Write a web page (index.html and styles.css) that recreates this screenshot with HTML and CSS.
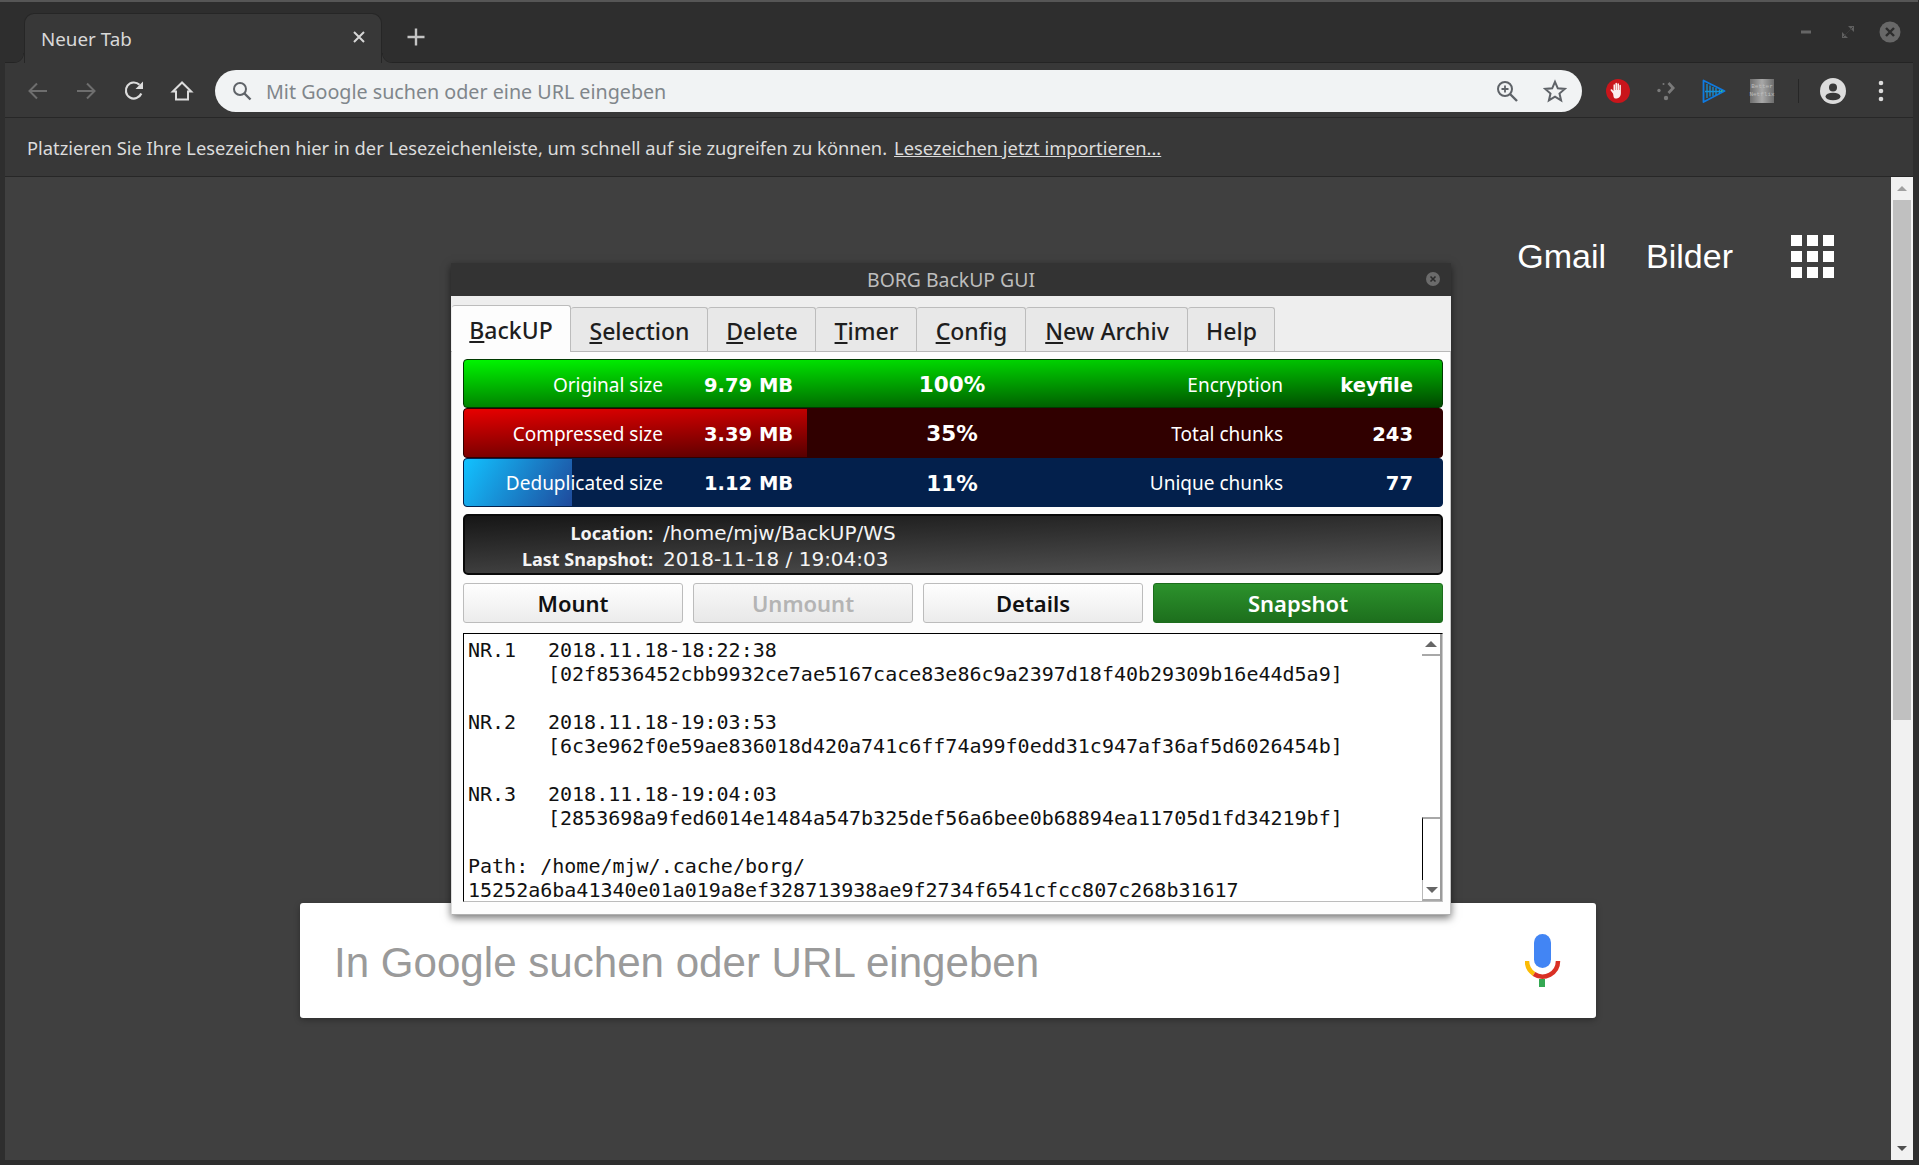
FILE: index.html
```html
<!DOCTYPE html>
<html lang="de">
<head>
<meta charset="utf-8">
<title>Neuer Tab</title>
<link rel="stylesheet" href="styles.css">
</head>
<body>
<div class="browser">
  <header class="tabstrip">
    <div class="tab">
      <span class="tab-title">Neuer Tab</span>
      <svg class="tab-close" width="14" height="14" viewBox="0 0 14 14"><path d="M2 2l10 10M12 2L2 12" stroke="#d6d6d6" stroke-width="2" fill="none"/></svg>
    </div>
    <svg class="newtab" width="20" height="20" viewBox="0 0 20 20"><path d="M10 1.500v17M1.500 10h17" stroke="#c4c4c4" stroke-width="2.400" fill="none"/></svg>
    <div class="wm">
      <svg class="wm-min" width="10" height="4" viewBox="0 0 10 4"><rect width="10" height="3" y="0.500" fill="#666"/></svg>
      <svg class="wm-max" width="12" height="12" viewBox="0 0 12 12"><path d="M0 12V6l6 6zM12 0v6L6 0z" fill="#5f5f5f"/><path d="M1 11L11 1" stroke="#3a3a3a" stroke-width="1"/></svg>
      <svg class="wm-close" width="22" height="22" viewBox="0 0 22 22"><circle cx="11" cy="11" r="10.500" fill="#686868"/><path d="M7 7l8 8M15 7l-8 8" stroke="#2c2c2c" stroke-width="2.400" fill="none"/></svg>
    </div>
  </header>

  <nav class="toolbar">
    <svg class="nav-icon" width="24" height="24" viewBox="0 0 24 24"><path d="M21 12H3.500M11 4.500L3.500 12l7.500 7.500" stroke="#6e6e6e" stroke-width="2" fill="none"/></svg>
    <svg class="nav-icon" width="24" height="24" viewBox="0 0 24 24"><path d="M3 12h17.500M13 4.500l7.500 7.500-7.500 7.500" stroke="#6e6e6e" stroke-width="2" fill="none"/></svg>
    <svg class="nav-icon" width="24" height="24" viewBox="0 0 24 24"><path d="M19.300 14.500A8 8 0 1 1 17.500 5.800" stroke="#dcdcdc" stroke-width="2.200" fill="none"/><path d="M21 2.500V10h-7.500z" fill="#dcdcdc"/></svg>
    <svg class="nav-icon" width="24" height="24" viewBox="0 0 24 24"><path d="M12 3.500L2.800 12.500H6V20.500H18V12.500H21.200z" stroke="#dcdcdc" stroke-width="2" fill="none"/></svg>
    <div class="omnibox">
      <svg width="20" height="20" viewBox="0 0 20 20"><circle cx="8" cy="8" r="6" stroke="#5f6368" stroke-width="2" fill="none"/><path d="M12.500 12.500l6 6" stroke="#5f6368" stroke-width="2.400"/></svg>
      <span class="omni-text">Mit Google suchen oder eine URL eingeben</span>
      <svg class="omni-zoom" width="22" height="22" viewBox="0 0 22 22"><circle cx="9" cy="9" r="7" stroke="#5f6368" stroke-width="2" fill="none"/><path d="M14 14l7 7" stroke="#5f6368" stroke-width="2.400"/><path d="M9 5.500v7M5.500 9h7" stroke="#5f6368" stroke-width="1.800"/></svg>
      <svg class="omni-star" width="24" height="24" viewBox="0 0 24 24"><path d="M12 2.800l2.800 6.500 7 .6-5.300 4.600 1.600 6.900-6.100-3.700-6.100 3.700 1.600-6.900-5.300-4.600 7-.6z" stroke="#5f6368" stroke-width="2" fill="none"/></svg>
    </div>
    <div class="extensions">
      <svg width="24" height="24" viewBox="0 0 24 24"><circle cx="12" cy="12" r="12" fill="#c9151b"/><path d="M7 14.500l-2.300-3c-.6-.9.700-1.700 1.400-.9l1.400 1.500V6c0-1.100 1.500-1.100 1.500 0v5h.4V4.500c0-1.100 1.600-1.100 1.600 0V11h.4V5c0-1.100 1.600-1.100 1.600 0v6h.4V6.500c0-1.100 1.500-1.100 1.500 0V14c0 3.300-2 5.500-4.800 5.500S7.700 17.500 7 14.500z" fill="#fbeeee"/></svg>
      <svg width="24" height="24" viewBox="0 0 24 24"><circle cx="5" cy="11.500" r="1.700" fill="#7a7a7a"/><circle cx="9.500" cy="5" r="1" fill="#7a7a7a"/><circle cx="12" cy="19" r="2.200" fill="#7a7a7a"/><path d="M15.500 3l5.500 6-5.500 6-2-2 3.700-4-3.700-4z" fill="#7a7a7a"/></svg>
      <svg width="24" height="24" viewBox="0 0 24 24"><path d="M1.500 1.500L22.500 12 1.500 23z" stroke="#0f7ae0" stroke-width="1.800" fill="none" stroke-linejoin="round"/><path d="M5 5v14M8 6.500v11M11 8v9M14 9v7M17.500 10.500v4M3 12.500h17" stroke="#1590d8" stroke-width="1.300" fill="none"/><path d="M19 11l2.500 1-2.500 1z" fill="#35c48b"/></svg>
      <div class="netflix"><span>Better</span><span>Netflix</span></div>
    </div>
    <span class="tool-sep"></span>
    <svg class="avatar" width="26" height="26" viewBox="0 0 26 26"><circle cx="13" cy="13" r="13" fill="#dcdcdc"/><circle cx="13" cy="9.500" r="4" fill="#383838"/><ellipse cx="13" cy="18.500" rx="7.500" ry="3.800" fill="#383838"/></svg>
    <svg class="menu-dots" width="6" height="22" viewBox="0 0 6 22"><circle cx="3" cy="3" r="2.300" fill="#dcdcdc"/><circle cx="3" cy="11" r="2.300" fill="#dcdcdc"/><circle cx="3" cy="19" r="2.300" fill="#dcdcdc"/></svg>
  </nav>

  <div class="bookmarks">
    <span>Platzieren Sie Ihre Lesezeichen hier in der Lesezeichenleiste, um schnell auf sie zugreifen zu können.</span>
    <a class="bm-link">Lesezeichen jetzt importieren...</a>
  </div>

  <div class="viewport">
    <main class="page">
      <div class="g-header">
        <a class="g-link">Gmail</a>
        <a class="g-link">Bilder</a>
        <div class="g-apps"><i></i><i></i><i></i><i></i><i></i><i></i><i></i><i></i><i></i></div>
      </div>
      <div class="g-search">
        <span class="g-placeholder">In Google suchen oder URL eingeben</span>
        <svg class="g-mic" width="36" height="54" viewBox="0 0 36 54"><rect x="9" y="0" width="17" height="34" rx="8.500" fill="#4285f4"/><path d="M2 27a15.500 15.500 0 0 0 7 13" stroke="#fbbc05" stroke-width="4.500" fill="none"/><path d="M9 40a15.500 15.500 0 0 0 24-13" stroke="#d93025" stroke-width="4.500" fill="none"/><rect x="14" y="45" width="6" height="8" fill="#34a853"/></svg>
      </div>

      <section class="dialog">
        <div class="dlg-title">
          <span class="dlg-name">BORG BackUP GUI</span>
          <svg class="dlg-close" width="14" height="14" viewBox="0 0 14 14"><circle cx="7" cy="7" r="7" fill="#6b6b6b"/><path d="M4.500 4.500l5 5M9.500 4.500l-5 5" stroke="#2c2c2c" stroke-width="1.600"/></svg>
        </div>
        <div class="dlg-tabs">
          <span class="dtab dtab-active"><u>B</u>ackUP</span>
          <span class="dtab w-sel"><u>S</u>election</span>
          <span class="dtab w-del"><u>D</u>elete</span>
          <span class="dtab w-tim"><u>T</u>imer</span>
          <span class="dtab w-cfg"><u>C</u>onfig</span>
          <span class="dtab w-new"><u>N</u>ew Archiv</span>
          <span class="dtab w-hlp">Help</span>
        </div>
        <div class="dlg-panel">
          <div class="stats">
            <div class="stat stat-green"><span class="s-label">Original size</span><b class="s-val">9.79 MB</b><b class="s-pct">100%</b><span class="s-label">Encryption</span><b class="s-right">keyfile</b></div>
            <div class="stat stat-red"><span class="s-label">Compressed size</span><b class="s-val">3.39 MB</b><b class="s-pct">35%</b><span class="s-label">Total chunks</span><b class="s-right">243</b></div>
            <div class="stat stat-blue"><span class="s-label">Deduplicated size</span><b class="s-val">1.12 MB</b><b class="s-pct">11%</b><span class="s-label">Unique chunks</span><b class="s-right">77</b></div>
          </div>
          <div class="info">
            <b class="i-key">Location:</b><span class="i-val">/home/mjw/BackUP/WS</span>
            <b class="i-key">Last Snapshot:</b><span class="i-val">2018-11-18 / 19:04:03</span>
          </div>
          <div class="actions">
            <button class="btn">Mount</button>
            <button class="btn btn-off">Unmount</button>
            <button class="btn">Details</button>
            <button class="btn btn-go">Snapshot</button>
          </div>
          <div class="logbox">
            <div class="log">
              <div class="entry"><span>NR.1</span><span>2018.11.18-18:22:38</span><span></span><span>[02f8536452cbb9932ce7ae5167cace83e86c9a2397d18f40b29309b16e44d5a9]</span></div>
              <div class="entry"><span>NR.2</span><span>2018.11.18-19:03:53</span><span></span><span>[6c3e962f0e59ae836018d420a741c6ff74a99f0edd31c947af36af5d6026454b]</span></div>
              <div class="entry"><span>NR.3</span><span>2018.11.18-19:04:03</span><span></span><span>[2853698a9fed6014e1484a547b325def56a6bee0b68894ea11705d1fd34219bf]</span></div>
              <div>Path: /home/mjw/.cache/borg/</div>
              <div>15252a6ba41340e01a019a8ef328713938ae9f2734f6541cfcc807c268b31617</div>
            </div>
            <div class="log-scroll">
              <div class="ls-btn ls-up"><i></i></div>
              <div class="ls-track"></div>
              <div class="ls-thumb"></div>
              <div class="ls-btn ls-down"><i></i></div>
            </div>
          </div>
        </div>
      </section>
    </main>
    <aside class="scrollbar">
      <div class="sb-btn"><i class="sb-up"></i></div>
      <div class="sb-track"><div class="sb-thumb"></div></div>
      <div class="sb-btn sb-btn-bottom"><i class="sb-down"></i></div>
    </aside>
  </div>
</div>
</body>
</html>
```

FILE: styles.css
```css
* { box-sizing: border-box; }
html, body { margin: 0; padding: 0; background: #2c2c2c; }
body { width: 1919px; height: 1165px; overflow: hidden; }

.browser {
  width: 1918px;
  height: 1165px;
  display: flex;
  flex-direction: column;
  background: #2e2e2e;
  border-top: 2px solid #565656;
  padding: 0 5px 5px 5px;
  font-family: "Noto Sans", sans-serif;
  color: #e2e2e2;
}

/* tab strip */
.tabstrip {
  height: 61px;
  flex: none;
  display: flex;
  align-items: flex-end;
  padding-left: 19px;
  background: #2e2e2e;
  border-bottom: 1px solid #242424;
}
.tab {
  position: relative;
  width: 358px;
  height: 50px;
  background: #383838;
  border: 1px solid #262626;
  border-bottom: 0;
  border-radius: 10px 10px 0 0;
  display: flex;
  align-items: center;
  padding: 0 15px 0 16px;
  margin-bottom: -1px;
  color: #d8d8d8;
  font-size: 18.800px;
}
.tab::before,
.tab::after {
  content: "";
  position: absolute;
  bottom: 0;
  width: 10px;
  height: 10px;
}
.tab::before {
  left: -11px;
  background: radial-gradient(circle at 0 0, transparent 9px, #262626 9.500px, #383838 10.500px);
}
.tab::after {
  right: -11px;
  background: radial-gradient(circle at 100% 0, transparent 9px, #262626 9.500px, #383838 10.500px);
}
.tab-title { flex: 1; }
.tab-close { margin-top: -3px; }
.newtab { margin: 0 0 15px 24px; }
.wm {
  margin-left: auto;
  align-self: stretch;
  display: flex;
  align-items: center;
  padding: 0 12px 0 0;
}
.wm-min { margin-right: 31px; }
.wm-max { margin-right: 25px; }

/* toolbar */
.toolbar {
  height: 55px;
  flex: none;
  display: flex;
  align-items: center;
  background: #383838;
  border-bottom: 1px solid #272727;
  padding: 2px 0 0 21px;
}
.nav-icon { margin-right: 24px; }
.omnibox {
  width: 1367px;
  height: 42px;
  margin-left: -3px;
  background: #f1f3f4;
  border-radius: 21px;
  display: flex;
  align-items: center;
  padding-left: 17px;
  color: #80868b;
}
.omni-text { flex: 1; margin-left: 14px; padding-top: 1px; font-size: 19.700px; }
.omni-star { margin: 0 15px 0 25px; }
.extensions {
  display: flex;
  align-items: center;
  gap: 24px;
  margin-left: 24px;
}
.netflix {
  width: 24px;
  height: 24px;
  background: linear-gradient(90deg, #6d6d6d, #a8a8a8 50%, #6d6d6d);
  color: #bdbdbd;
  font-family: "Liberation Mono", monospace;
  font-size: 6px;
  line-height: 8px;
  display: flex;
  flex-direction: column;
  align-items: center;
  justify-content: center;
}
.tool-sep { width: 1px; height: 24px; background: #262626; margin-left: 24px; }
.avatar { margin-left: 21px; }
.menu-dots { margin-left: 32px; }

/* bookmark bar */
.bookmarks {
  height: 59px;
  flex: none;
  display: flex;
  align-items: center;
  gap: 7px;
  background: #383838;
  border-bottom: 1px solid #272727;
  padding: 1px 0 0 22px;
  font-size: 18.300px;
  color: #dcdcdc;
}
.bm-link { text-decoration: underline; }

/* page */
.viewport { flex: 1; display: flex; min-height: 0; }
.page {
  flex: 1;
  position: relative;
  background: #404040;
  font-family: "Liberation Sans", Arial, sans-serif;
}
.g-header {
  display: flex;
  align-items: center;
  justify-content: flex-end;
  height: 43px;
  margin-top: 58px;
  padding-right: 57px;
}
.g-link { font-size: 34px; line-height: 40px; margin-top: -2px; color: #fff; }
.g-link + .g-link { margin-left: 40px; }
.g-apps {
  width: 43px;
  display: grid;
  grid-template-columns: repeat(3, 11px);
  gap: 5px;
  margin-left: 58px;
}
.g-apps i { height: 11px; background: #fff; }
.g-search {
  width: 1296px;
  height: 115px;
  margin: 625px 0 0 295px;
  background: #fff;
  border-radius: 3px;
  box-shadow: 0 2px 6px rgba(0,0,0,.3);
  display: flex;
  align-items: center;
  padding: 0 35px 0 34px;
}
.g-placeholder { flex: 1; padding-top: 4px; font-size: 42.100px; color: #9a9a9a; }
.g-mic { margin-top: 0; }

/* dialog window */
.dialog {
  position: absolute;
  left: 446px;
  top: 86px;
  width: 1000px;
  height: 652px;
  display: flex;
  flex-direction: column;
  box-shadow: 0 3px 8px rgba(0,0,0,.55);
  font-family: "Noto Sans", sans-serif;
  background: #fdfdfd;
}
.dlg-title {
  height: 33px;
  flex: none;
  background: #333;
  display: flex;
  align-items: center;
  justify-content: center;
  position: relative;
  color: #bdbdbd;
  font-size: 19.400px;
}
.dlg-close { position: absolute; right: 11px; top: 9px; }
.dlg-tabs {
  height: 56px;
  flex: none;
  background: #eee;
  display: flex;
  align-items: flex-end;
  padding-left: 1px;
  border-bottom: 1px solid #b8b8b8;
}
.dtab {
  height: 44px;
  padding: 2px 0 0 1px;
  background: #e8e8e8;
  border: 1px solid #bcbcbc;
  border-bottom: 0;
  border-left: 0;
  border-radius: 3px 3px 0 0;
  display: flex;
  align-items: center;
  justify-content: center;
  white-space: pre;
  color: #1e1e1e;
  font-size: 23px;
  font-weight: 500;
}
.dtab-active {
  width: 119px;
  height: 47px;
  padding: 2px 0 0;
  margin-bottom: -1px;
  background: #fdfdfd;
}
.w-sel { width: 137px; }
.w-del { width: 108px; }
.w-tim { width: 101px; }
.w-cfg { width: 109px; }
.w-new { width: 162px; }
.w-hlp { width: 87px; }

.dlg-panel {
  flex: 1;
  min-height: 0;
  display: flex;
  flex-direction: column;
  padding: 7px 7px 12px 11px;
  border-right: 1px solid #c4c4c4;
  border-bottom: 1px solid #b0b0b0;
  border-left: 1px solid #dcdcdc;
}
.stats { height: 148px; flex: none; display: flex; flex-direction: column; }
.stat {
  flex: 1;
  display: grid;
  grid-template-columns: 199px 189px 200px 231px 130px;
  align-items: center;
  border-radius: 4px;
  border: 1px solid #04280f;
  color: #fff;
  font-size: 19px;
}
.stat-green {
  background: linear-gradient(178.500deg, #00f500, #004800);
  border-color: #003a00;
}
.stat-red {
  background: linear-gradient(177deg, #e80000, #560000) no-repeat 0 0 / 343px 100%, #300000;
  border-color: #300000;
}
.stat-blue {
  background: linear-gradient(120deg, #12c2ff, #1f4a9c) no-repeat 0 0 / 108px 100%, #03204c;
  border-color: #03204c;
}
.s-label { text-align: right; padding-top: 2px; }
.s-val, .s-pct, .s-right {
  padding-top: 3px;
  font-family: "DejaVu Sans", sans-serif;
  font-weight: 700;
  font-size: 19.500px;
}
.s-val { padding-left: 41px; }
.s-pct { text-align: center; padding-top: 2px; font-size: 21.500px; }
.s-right { text-align: right; }

.info {
  height: 61px;
  flex: none;
  margin-top: 7px;
  padding-top: 2px;
  display: grid;
  grid-template-columns: 188px 1fr;
  column-gap: 10px;
  align-content: center;
  line-height: 26px;
  border: 2px solid #0a0a0a;
  border-radius: 5px;
  background: linear-gradient(178deg, #161616, #565656);
  color: #f4f4f4;
}
.i-key { text-align: right; font-size: 18px; }
.i-val { font-family: "DejaVu Sans", sans-serif; font-size: 20px; }

.actions { flex: none; display: flex; gap: 10px; margin-top: 8px; }
.btn {
  width: 220px;
  height: 40px;
  padding: 0;
  border: 1px solid #bcbcbc;
  border-radius: 3px;
  background: linear-gradient(#fefefe, #ececec);
  color: #111;
  font-family: "Noto Sans", sans-serif;
  font-size: 22px;
  font-weight: 600;
}
.btn-off { color: #b4b4b4; background: linear-gradient(#f8f8f8, #e8e8e8); }
.btn-go {
  width: 290px;
  color: #fff;
  border-color: #1c6d1c;
  background: linear-gradient(#2c922c, #1d6f1d);
}

.logbox {
  flex: 1;
  min-height: 0;
  display: flex;
  margin-top: 10px;
  border-top: 1px solid #000;
  border-left: 1px solid #000;
  border-bottom: 1px solid #bcbcbc;
  border-right: 1px solid #c8c8c8;
  background: #fff;
  overflow: hidden;
}
.log {
  flex: 1;
  padding: 4px 0 0 4px;
  font-family: "DejaVu Sans Mono", monospace;
  font-size: 20px;
  line-height: 24px;
  color: #111;
}
.entry {
  display: grid;
  grid-template-columns: 80px 1fr;
  margin-bottom: 24px;
}
.log-scroll {
  width: 20px;
  flex: none;
  display: flex;
  flex-direction: column;
  border-right: 2px solid #9a9a9a;
}
.ls-btn {
  height: 22px;
  flex: none;
  display: flex;
  align-items: center;
  justify-content: center;
  border-bottom: 2px solid #a8a8a8;
}
.ls-down { height: 21px; border-bottom: 2px solid #a8a8a8; border-left: 1px solid #b8b8b8; }
.ls-up i {
  border: 6px solid transparent;
  border-top: 0;
  border-bottom: 6px solid #666;
}
.ls-down i {
  border: 6px solid transparent;
  border-bottom: 0;
  border-top: 6px solid #666;
}
.ls-track { flex: 1; }
.ls-thumb {
  height: 63px;
  flex: none;
  border-top: 2px solid #a8a8a8;
  border-left: 1px solid #000;
}

/* page scrollbar */
.scrollbar {
  width: 22px;
  flex: none;
  display: flex;
  flex-direction: column;
  background: #f1f1f1;
}
.sb-btn { height: 23px; flex: none; display: flex; align-items: center; justify-content: center; }
.sb-track { flex: 1; padding: 0 2px; }
.sb-thumb { height: 520px; background: #c0c0c0; }
.sb-up {
  border: 5px solid transparent;
  border-top: 0;
  border-bottom: 5px solid #a0a0a0;
}
.sb-down {
  border: 5px solid transparent;
  border-bottom: 0;
  border-top: 5px solid #4f4f4f;
}
```
